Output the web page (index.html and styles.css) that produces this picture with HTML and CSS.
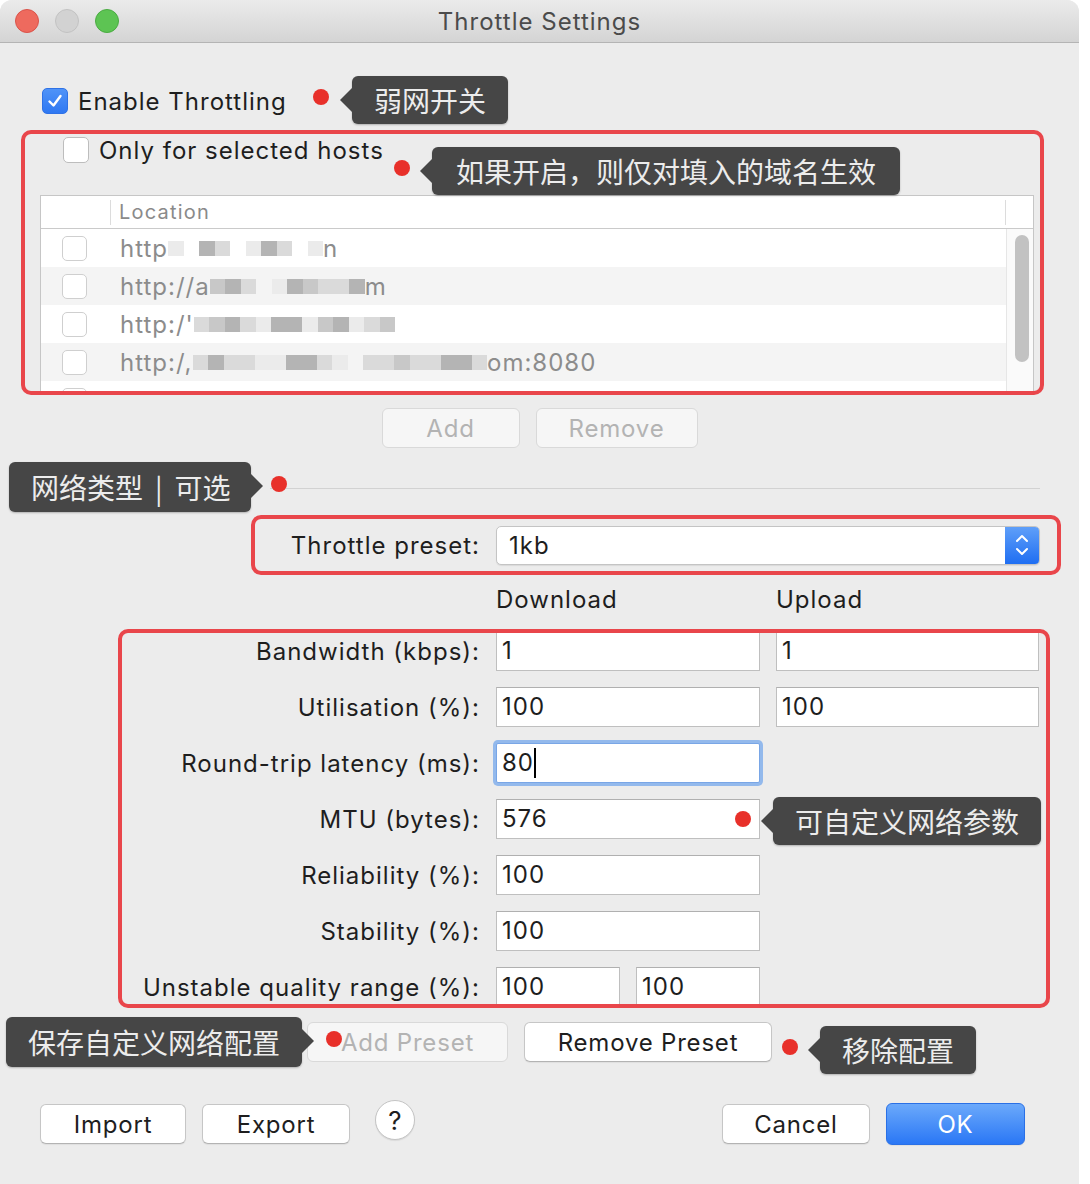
FILE: index.html
```html
<!DOCTYPE html>
<html>
<head>
<meta charset="utf-8">
<link rel="stylesheet" href="styles.css">
</head>
<body>
<div class="window">
  <div class="titlebar">
    <div class="lights"><span class="light l-red"></span><span class="light l-gray"></span><span class="light l-green"></span></div>
    <div class="title">Throttle Settings</div>
    <div></div>
  </div>

  <div class="enable-row">
    <span class="cb cb-on"><svg width="18" height="18" viewBox="0 0 18 18"><path d="M3.5 9.5 L7.5 13.5 L14.5 4" fill="none" stroke="#fff" stroke-width="2.4" stroke-linecap="round" stroke-linejoin="round"/></svg></span>
    <span class="lbl">Enable Throttling</span>
  </div>

  <div class="redbox box1">
    <div class="only-row">
      <span class="cb"></span>
      <span class="lbl">Only for selected hosts</span>
    </div>
    <div class="hosts">
      <div class="hosts-head">
        <div class="hcol-cb"></div>
        <div class="hcol-loc">Location</div>
        <div class="hcol-sb"></div>
      </div>
      <div class="hosts-body">
        <div class="rows">
          <div class="row"><span class="rcb"><span class="cb sm"></span></span><span class="url">http<i class="c4"></i><i class="c0"></i><i class="c1"></i><i class="c3"></i><i class="c0"></i><i class="c4"></i><i class="c1"></i><i class="c3"></i><i class="c0"></i><i class="c4"></i>n</span></div>
          <div class="row alt"><span class="rcb"><span class="cb sm"></span></span><span class="url">http://a<i class="c2"></i><i class="c1"></i><i class="c3"></i><i class="c0"></i><i class="c4"></i><i class="c1"></i><i class="c2"></i><i class="c3"></i><i class="c3"></i><i class="c1"></i>m</span></div>
          <div class="row"><span class="rcb"><span class="cb sm"></span></span><span class="url">http:/'<i class="c3"></i><i class="c2"></i><i class="c1"></i><i class="c3"></i><i class="c4"></i><i class="c1"></i><i class="c1"></i><i class="c4"></i><i class="c2"></i><i class="c1"></i><i class="c4"></i><i class="c3"></i><i class="c2"></i></span></div>
          <div class="row alt"><span class="rcb"><span class="cb sm"></span></span><span class="url">http:/,<i class="c3"></i><i class="c1"></i><i class="c3"></i><i class="c3"></i><i class="c4"></i><i class="c4"></i><i class="c1"></i><i class="c1"></i><i class="c3"></i><i class="c4"></i><i class="c0"></i><i class="c3"></i><i class="c3"></i><i class="c2"></i><i class="c3"></i><i class="c3"></i><i class="c1"></i><i class="c1"></i><i class="c3"></i>om:8080</span></div>
          <div class="row"><span class="rcb"><span class="cb sm"></span></span><span class="url"></span></div>
        </div>
        <div class="sbtrack"><div class="thumb"></div></div>
      </div>
    </div>
  </div>

  <div class="btnrow center">
    <button class="btn dis w-add">Add</button>
    <button class="btn dis w-remove">Remove</button>
  </div>

  <div class="sep"></div>

  <div class="redbox box2">
    <div class="plabel">Throttle preset:</div>
    <div class="select">
      <span class="sel-val">1kb</span>
      <span class="stepper"><svg width="16" height="26" viewBox="0 0 16 26"><path d="M3 9 L8 4 L13 9 M3 17 L8 22 L13 17" fill="none" stroke="#fff" stroke-width="2" stroke-linecap="round" stroke-linejoin="round"/></svg></span>
    </div>
  </div>

  <div class="colhead"><span class="ch-dl">Download</span><span>Upload</span></div>

  <div class="redbox box3">
    <div class="grid">
      <div class="flabel">Bandwidth (kbps):</div>
      <div class="inp">1</div>
      <div class="inp">1</div>

      <div class="flabel">Utilisation (%):</div>
      <div class="inp">100</div>
      <div class="inp">100</div>

      <div class="flabel">Round-trip latency (ms):</div>
      <div class="inp focus">80<span class="caret"></span></div>
      <div></div>

      <div class="flabel">MTU (bytes):</div>
      <div class="inp">576</div>
      <div></div>

      <div class="flabel">Reliability (%):</div>
      <div class="inp">100</div>
      <div></div>

      <div class="flabel">Stability (%):</div>
      <div class="inp">100</div>
      <div></div>

      <div class="flabel">Unstable quality range (%):</div>
      <div class="pair"><div class="inp">100</div><div class="inp">100</div></div>
      <div></div>
    </div>
  </div>

  <div class="btnrow preset-row">
    <button class="btn dis w-addp">Add Preset</button>
    <button class="btn w-remp">Remove Preset</button>
  </div>

  <div class="bottom">
    <div class="group">
      <button class="btn w-imp">Import</button>
      <button class="btn w-exp">Export</button>
      <span class="help">?</span>
    </div>
    <div class="group">
      <button class="btn w-cancel">Cancel</button>
      <button class="btn ok">OK</button>
    </div>
  </div>

  <!-- annotations -->
  <span class="dot d1"></span>
  <span class="tip tip-l t1">弱网开关</span>
  <span class="dot d2"></span>
  <span class="tip tip-l t2">如果开启，则仅对填入的域名生效</span>
  <span class="dot d3"></span>
  <span class="tip tip-r t3">网络类型<span class="bar">|</span>可选</span>
  <span class="dot d4"></span>
  <span class="tip tip-l t4">可自定义网络参数</span>
  <span class="tip tip-r t5">保存自定义网络配置</span>
  <span class="dot d5"></span>
  <span class="dot d6"></span>
  <span class="tip tip-l t6">移除配置</span>
</div>
</body>
</html>
```

FILE: styles.css
```css
* { box-sizing: border-box; }
body {
  margin: 0;
  background: #ffffff;
  font-family: Inter, "Noto Sans CJK SC", sans-serif;
  color: #1e1e1e;
  letter-spacing: 1px;
}
.window {
  position: relative;
  width: 1079px;
  height: 1184px;
  background: #ececec;
  border-top-left-radius: 12px;
  border-top-right-radius: 12px;
  overflow: hidden;
}
.titlebar {
  height: 43px;
  background: linear-gradient(#ebebeb, #d4d4d4);
  border-bottom: 1px solid #b4b4b4;
  display: grid;
  grid-template-columns: 1fr auto 1fr;
  align-items: center;
}
.lights { display: flex; gap: 16px; padding-left: 15px; }
.light { width: 24px; height: 24px; border-radius: 50%; display: block; }
.l-red { background: #ee6a5e; border: 1px solid #d9534a; }
.l-gray { background: #d2d2d2; border: 1px solid #c2c2c2; }
.l-green { background: #5dc453; border: 1px solid #4aab42; }
.title { font-size: 24px; color: #4b4b4b; }

.cb {
  width: 26px; height: 26px;
  border-radius: 5px;
  background: #fff;
  border: 1px solid #bdbdbd;
  display: inline-flex;
  align-items: center;
  justify-content: center;
  flex: none;
}
.cb-on { background: linear-gradient(#4f93f8, #2f78f2); border-color: #2f72e6; }
.cb.sm { width: 25px; height: 25px; border-color: #cfcfcf; }
.lbl { font-size: 24px; color: #1e1e1e; }

.enable-row {
  margin-top: 45px;
  height: 26px;
  padding-left: 42px;
  display: flex;
  align-items: center;
  gap: 10px;
}

.redbox {
  border: 4px solid #e9464b;
  border-radius: 10px;
}
.box1 {
  margin-top: 16px;
  margin-left: 21px;
  width: 1023px;
  height: 265px;
}
.only-row {
  margin-top: 3px;
  padding-left: 38px;
  height: 26px;
  display: flex;
  align-items: center;
  gap: 10px;
}
.hosts {
  margin-top: 32px;
  margin-left: 15px;
  width: 994px;
  height: 196px;
  border: 1px solid #c6c6c6;
  border-bottom: none;
  background: #fff;
  overflow: hidden;
}
.hosts-head {
  height: 33px;
  border-bottom: 1px solid #cacaca;
  display: flex;
  align-items: center;
}
.hcol-cb { width: 70px; height: 25px; border-right: 1px solid #dcdcdc; }
.hcol-loc { flex: 1; padding-left: 8px; font-size: 20px; color: #8a8a8a; height: 25px; line-height: 25px; border-right: 1px solid #dcdcdc; letter-spacing: 1.2px; }
.hcol-sb { width: 27px; }
.hosts-body { display: flex; }
.rows { flex: 1; }
.row { height: 38px; display: flex; align-items: center; background: #fff; }
.row.alt { background: #f4f4f4; }
.rcb { width: 79px; padding-left: 21px; display: flex; }
.url { font-size: 24px; color: #8c8c8c; display: flex; align-items: center; white-space: nowrap; }
.url i { display: inline-block; width: 15.5px; height: 15px; }
.c0 { background: transparent; }
.c1 { background: #b4b4b4; }
.c2 { background: #c8c8c8; }
.c3 { background: #dadada; }
.c4 { background: #ebebeb; }
.sbtrack {
  width: 27px;
  background: #fafafa;
  border-left: 1px solid #e6e6e6;
  padding-top: 6px;
  padding-left: 8px;
}
.thumb { width: 14px; height: 127px; border-radius: 7px; background: #c2c2c2; }

.btnrow { display: flex; gap: 16px; }
.btnrow.center { justify-content: center; margin-top: 13px; }
.btn {
  height: 40px;
  background: #fff;
  border: 1px solid #c6c6c6;
  border-bottom-color: #b3b3b3;
  border-radius: 6px;
  box-shadow: 0 1px 1px rgba(0,0,0,0.06);
  font-family: Inter, "Noto Sans CJK SC", sans-serif;
  font-size: 24px;
  letter-spacing: 0.8px;
  color: #1e1e1e;
  padding: 0;
}
.btn.dis { background: #f6f6f6; border-color: #d9d9d9; color: #b3b3b3; box-shadow: none; }
.w-add { width: 138px; }
.w-remove { width: 162px; }
.w-addp { width: 201px; }
.w-remp { width: 248px; }
.w-imp { width: 146px; }
.w-exp { width: 148px; }
.w-cancel { width: 148px; }
.btn.ok {
  width: 139px;
  height: 42px;
  background: linear-gradient(#6ba9fb, #2a77f5);
  border: 1px solid #2a70e6;
  color: #fff;
}

.sep {
  margin-top: 40px;
  margin-left: 270px;
  width: 770px;
  height: 1px;
  background: #d2d2d2;
}

.box2 {
  margin-top: 26px;
  margin-left: 251px;
  width: 810px;
  height: 60px;
  display: flex;
  align-items: center;
  gap: 16px;
}
.plabel { width: 225px; text-align: right; font-size: 24px; }
.select {
  width: 544px;
  height: 39px;
  background: #fff;
  border: 1px solid #c4c4c4;
  border-radius: 5px;
  box-shadow: 0 1px 1px rgba(0,0,0,0.08);
  display: flex;
  align-items: stretch;
  overflow: hidden;
}
.sel-val { flex: 1; font-size: 24px; padding-left: 12px; line-height: 37px; }
.stepper {
  width: 34px;
  background: linear-gradient(#5f9ff9, #1f6ef2);
  display: flex;
  align-items: center;
  justify-content: center;
}

.colhead {
  margin-top: 10px;
  padding-left: 496px;
  height: 30px;
  display: flex;
  font-size: 24px;
  line-height: 30px;
}
.ch-dl { width: 280px; }

.box3 {
  margin-top: 14px;
  margin-left: 118px;
  width: 932px;
  height: 379px;
  overflow: hidden;
}
.grid {
  margin-top: -2px;
  display: grid;
  grid-template-columns: 358px 264px 263px;
  column-gap: 16px;
  grid-auto-rows: 40px;
  row-gap: 16px;
}
.flabel { text-align: right; font-size: 24px; align-self: center; }
.inp {
  height: 40px;
  background: #fff;
  border: 1px solid #bfbfbf;
  border-top-color: #b0b0b0;
  font-size: 24px;
  padding-left: 5px;
  line-height: 38px;
  display: flex;
  align-items: center;
}
.inp.focus { border-color: #79a6e6; box-shadow: 0 0 0 3px #93b9ec; border-radius: 2px; }
.caret { display: inline-block; width: 2px; height: 30px; background: #000; margin-left: 0; }
.pair { display: flex; gap: 16px; }
.pair .inp { width: 124px; }

.preset-row { margin-top: 14px; padding-left: 307px; }

.bottom {
  margin-top: 41px;
  display: flex;
  justify-content: space-between;
  align-items: center;
  padding-left: 40px;
  padding-right: 54px;
}
.group { display: flex; gap: 16px; align-items: center; }
.help {
  width: 40px; height: 40px;
  margin-left: 9px;
  margin-top: -8px;
  border-radius: 50%;
  background: #fff;
  border: 1px solid #c4c4c4;
  box-shadow: 0 1px 1px rgba(0,0,0,0.08);
  display: flex;
  align-items: center;
  justify-content: center;
  font-size: 26px;
  letter-spacing: 0;
}

/* annotations */
.dot {
  position: absolute;
  width: 16px; height: 16px;
  border-radius: 50%;
  background: #e8302a;
}
.d1 { left: 313px; top: 89px; }
.d2 { left: 394px; top: 160px; }
.d3 { left: 271px; top: 476px; }
.d4 { left: 735px; top: 811px; }
.d5 { left: 326px; top: 1031px; }
.d6 { left: 782px; top: 1039px; }

.tip {
  position: absolute;
  height: 48px;
  line-height: 48px;
  padding: 0 22px;
  background: #464646;
  color: #ececec;
  border-radius: 6px;
  font-family: "Noto Sans CJK SC", sans-serif;
  font-size: 28px;
  letter-spacing: 0;
  white-space: nowrap;
  box-shadow: 0 1px 2px rgba(0,0,0,0.25);
}
.tip-l::before {
  content: "";
  position: absolute;
  left: -12px;
  top: 12px;
  border-top: 12px solid transparent;
  border-bottom: 12px solid transparent;
  border-right: 12px solid #464646;
}
.tip-r::after {
  content: "";
  position: absolute;
  right: -12px;
  top: 12px;
  border-top: 12px solid transparent;
  border-bottom: 12px solid transparent;
  border-left: 12px solid #464646;
}
.bar { margin: 0 12px; }
.t1 { left: 352px; top: 76px; }
.t2 { left: 432px; top: 147px; padding: 0 24px; }
.t3 { left: 9px; top: 462px; height: 50px; line-height: 50px; padding-right: 20px; }
.t4 { left: 773px; top: 797px; }
.t5 { left: 6px; top: 1017px; height: 50px; line-height: 50px; }
.t6 { left: 820px; top: 1026px; }
```
